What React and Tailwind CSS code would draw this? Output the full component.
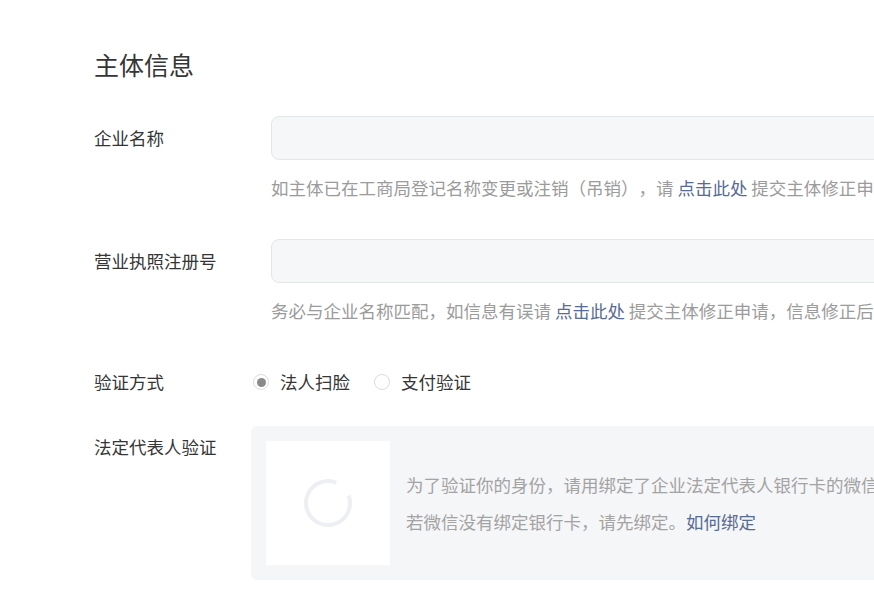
import React from "react";

const font = { fontFamily: '"Noto Sans CJK SC", "Noto Sans", sans-serif' };

// ─── Radio ───────────────────────────────────────────────────────────────────
function Radio({ checked, label }) {
  return (
    <label className="flex items-center">
      <span className="flex h-[16px] w-[16px] items-center justify-center rounded-full border border-[#dcdcdc] bg-white">
        {checked && <span className="h-[9px] w-[9px] rounded-full bg-[#8a8a8a]" />}
      </span>
      <span className="ml-[11px]">{label}</span>
    </label>
  );
}

// ─── Spinner ─────────────────────────────────────────────────────────────────
function Spinner() {
  return (
    <svg width="52" height="52" viewBox="0 0 52 52">
      <circle
        cx="26"
        cy="26"
        r="22"
        fill="none"
        stroke="#eeeff2"
        strokeWidth="4"
        strokeDasharray="119 19"
        transform="rotate(-20 26 26)"
      />
    </svg>
  );
}

export default function App() {
  return (
    <div
      className="h-[600px] w-[874px] overflow-hidden bg-white text-[17.5px] leading-[24px] text-[#353535] [text-spacing-trim:space-all]"
      style={font}
    >
      <div className="pl-[94px] pt-[47px]">
        <h2 className="text-[25px] leading-[34px]">主体信息</h2>

        {/* ── 企业名称 ── */}
        <div className="mt-[35px] flex">
          <div className="flex h-[44px] w-[177px] shrink-0 items-center">企业名称</div>
          <div>
            <div className="h-[44px] w-[700px] rounded-[8px] border border-[#e5e6e8] bg-[#f6f7f8]" />
            <p className="mt-[16px] whitespace-nowrap text-[#9b9b9b]">
              如主体已在工商局登记名称变更或注销（吊销），请{" "}
              <a className="text-[#576b95]">点击此处</a> 提交主体修正申请
            </p>
          </div>
        </div>

        {/* ── 营业执照注册号 ── */}
        <div className="mt-[39px] flex">
          <div className="flex h-[44px] w-[177px] shrink-0 items-center">营业执照注册号</div>
          <div>
            <div className="h-[44px] w-[700px] rounded-[8px] border border-[#e5e6e8] bg-[#f6f7f8]" />
            <p className="mt-[16px] whitespace-nowrap text-[#9b9b9b]">
              务必与企业名称匹配，如信息有误请 <a className="text-[#576b95]">点击此处</a>{" "}
              提交主体修正申请，信息修正后重新填写
            </p>
          </div>
        </div>

        {/* ── 验证方式 ── */}
        <div className="mt-[47px] flex items-center">
          <div className="w-[159px] shrink-0">验证方式</div>
          <div className="flex items-center gap-[24px]">
            <Radio checked label="法人扫脸" />
            <Radio label="支付验证" />
          </div>
        </div>

        {/* ── 法定代表人验证 ── */}
        <div className="mt-[32px] flex">
          <div className="mt-[9px] w-[157px] shrink-0">法定代表人验证</div>
          <div className="flex h-[154px] w-[700px] items-center rounded-[6px] bg-[#f5f6f7] p-[15px]">
            <div className="flex h-[124px] w-[124px] shrink-0 items-center justify-center bg-white">
              <Spinner />
            </div>
            <div className="ml-[16px] whitespace-nowrap leading-[37px] text-[#a3a3a3]">
              <p>为了验证你的身份，请用绑定了企业法定代表人银行卡的微信扫描二维码</p>
              <p>
                若微信没有绑定银行卡，请先绑定。<a className="text-[#576b95]">如何绑定</a>
              </p>
            </div>
          </div>
        </div>
      </div>
    </div>
  );
}
